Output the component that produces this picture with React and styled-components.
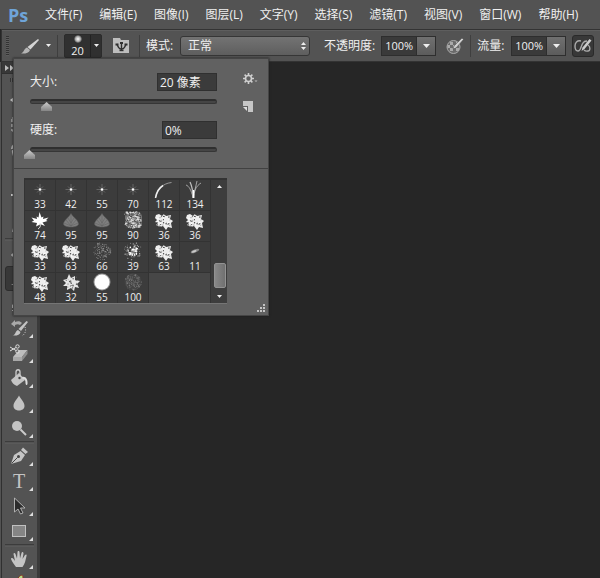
import React, { useState } from "react";
import styled, { createGlobalStyle } from "styled-components";

const GlobalStyle = createGlobalStyle`
  * {
    box-sizing: border-box;
  }

  body {
    margin: 0;
    overflow: hidden;
    background: #262626;
    color: #f0f0f0;
    font-family: "Open Sans", "Noto Sans CJK SC", sans-serif;
    font-size: 12px;
  }

  button, input, select {
    margin: 0;
    color: inherit;
    font-family: inherit;
    font-size: inherit;
  }
`;

const AppShell = styled.div`
  height: 100vh;
  display: flex;
  flex-direction: column;
  overflow: hidden;
`;

const MenuBar = styled.nav`
  flex: none;
  height: 29px;
  padding: 0 8px;
  display: flex;
  align-items: center;
  gap: 1px;
  background: #535353;
`;

const Logo = styled.span`
  width: 28px;
  color: #6fa4d8;
  font-size: 18px;
  font-weight: 700;
  line-height: 26px;
`;

const MenuButton = styled.button`
  flex: none;
  padding: 0 8px;
  border: none;
  background: none;
  line-height: 28px;
  white-space: nowrap;
`;

const OptionsBar = styled.div`
  position: relative;
  z-index: 2;
  flex: none;
  height: 33px;
  margin-left: 1px;
  padding: 0 4px;
  display: flex;
  align-items: center;
  gap: 6px;
  background: #535353;
  border: solid #333;
  border-width: 1px 0 1px 1px;
  box-shadow: inset 0 1px #5e5e5e;
`;

const Grip = styled.div`
  flex: none;
  width: 3px;
  height: 20px;
  background: repeating-linear-gradient(#333 0 1px, #5c5c5c 1px 2px);
`;

const Divider = styled.div`
  flex: none;
  width: 1px;
  height: 22px;
  background: #3f3f3f;
`;

const IconButton = styled.button`
  flex: none;
  padding: ${(p) => p.$padding || "0"};
  display: flex;
  align-items: center;
  gap: 6px;
  border: none;
  background: none;
`;

const PresetButton = styled.button`
  flex: none;
  width: 38px;
  height: 24px;
  padding: 0;
  display: flex;
  background: #303030;
  border: 1px solid #2b2b2b;
  border-radius: 2px;
  font-size: 11px;
`;

const PresetPreview = styled.span`
  flex: 1;
  height: 100%;
  display: flex;
  flex-direction: column;
  align-items: center;
  justify-content: space-between;
  line-height: 12px;
`;

const SoftDot = styled.span`
  width: 8px;
  height: 8px;
  border-radius: 50%;
  background: radial-gradient(#eee 10%, #aaa 45%, #303030 75%);
`;

const PresetArrow = styled.span`
  width: 11px;
  height: 100%;
  display: flex;
  align-items: center;
  justify-content: center;
  border-left: 1px solid #222;
`;

const FieldLabel = styled.label`
  flex: none;
  min-width: ${(p) => (p.$wide ? "50px" : "28px")};
  white-space: nowrap;
  line-height: 18px;
`;

const SelectWrap = styled.div`
  position: relative;
  flex: none;
  width: 130px;
  margin-right: 8px;
`;

const ModeSelect = styled.select`
  width: 100%;
  height: 20px;
  padding: 0 7px;
  appearance: none;
  background: linear-gradient(#737373, #5e5e5e);
  border: 1px solid #363636;
  border-radius: 3px;
`;

const SelectArrows = styled.svg`
  position: absolute;
  top: 5px;
  right: 4px;
  pointer-events: none;
`;

const Combo = styled.div`
  flex: none;
  display: flex;
  height: 20px;
  border: 1px solid #2e2e2e;
`;

const ComboInput = styled.input`
  width: 34px;
  padding: 0 0 0 3px;
  background: #3a3a3a;
  border: none;
  outline: none;
  font-size: 11px;
`;

const ComboButton = styled.button`
  width: 19px;
  padding: 0;
  display: flex;
  align-items: center;
  justify-content: center;
  background: linear-gradient(#707070, #5c5c5c);
  border: none;
  border-left: 1px solid #2e2e2e;
`;

const ToggleButton = styled.button`
  flex: none;
  width: 22px;
  height: 22px;
  padding: 0;
  display: flex;
  align-items: center;
  justify-content: center;
  background: #383838;
  border: 1px solid #2a2a2a;
  border-radius: 3px;
`;

const Workspace = styled.div`
  flex: 1;
  min-height: 0;
  display: flex;
`;

const ToolDock = styled.aside`
  flex: none;
  width: 40px;
  padding-left: 1px;
  background: #535353;
  border-right: 3px solid #3a3a3a;
`;

const ToolColumn = styled.div`
  height: 100%;
  display: flex;
  flex-direction: column;
  overflow: hidden;
  border-left: 1px solid #303030;
`;

const DockHeader = styled.button`
  flex: none;
  height: 12px;
  padding: 0 3px;
  display: flex;
  align-items: center;
  background: #383838;
  border: none;
  border-bottom: 1px solid #303030;
`;

const DockGrip = styled.div`
  flex: none;
  height: 4px;
  margin: 4px 8px 6px;
  background: repeating-linear-gradient(90deg, #333 0 1px, #5c5c5c 1px 2px);
`;

const ToolButton = styled.button`
  flex: none;
  height: 25px;
  padding: 0 4px 0 3px;
  display: flex;
  align-items: flex-end;
  background: ${(p) => (p.$active ? "#383838" : "none")};
  border: 1px solid ${(p) => (p.$active ? "#2c2c2c" : "transparent")};
  border-radius: 3px;
  margin: 0 1px 0 3px;

  & > svg {
    flex: none;
    margin-bottom: 2px;
  }
`;

const ToolDivider = styled.div`
  flex: none;
  height: 3px;
  margin: 0 3px;
  border-top: 1px solid #3c3c3c;
  border-bottom: 1px solid #5a5a5a;
`;

const Canvas = styled.main`
  flex: 1;
  background: #262626;
`;

const BrushPanel = styled.section`
  position: absolute;
  top: 28px;
  left: 11px;
  width: 256px;
  background: #616161;
  border: 1px solid #454545;
  box-shadow: 0 0 2px #1c1c1c;
`;

const BrushSettings = styled.div`
  display: flex;
  justify-content: space-between;
  padding: 14px 10px 16px 16px;
  border-bottom: 1px solid #414141;
`;

const Controls = styled.div`
  width: 187px;
  display: grid;
  gap: 17px;
`;

const Control = styled.div`
  display: grid;
  gap: 8px;
`;

const ControlRow = styled.div`
  display: flex;
  justify-content: space-between;
`;

const ValueInput = styled.input`
  width: ${(p) => (p.$narrow ? "55px" : "60px")};
  height: 18px;
  padding: 0 2px;
  background: #3b3b3b;
  border: 1px solid #303030;
  outline: none;
`;

const SliderTrack = styled.div`
  height: 5px;
  display: flex;
  background: #454545;
  border: 1px solid #363636;
  border-top: 2px solid #2f2f2f;
  border-radius: 3px;
`;

const Slider = styled.input`
  flex: 1;
  height: 11px;
  margin: 0 -7px;
  appearance: none;
  background: none;

  &::-webkit-slider-thumb {
    appearance: none;
    width: 11px;
    height: 9px;
    margin-top: 0;
    background: linear-gradient(#ccc, #858585);
    clip-path: polygon(50% 0, 100% 55%, 100% 100%, 0 100%, 0 55%);
  }
`;

const SideActions = styled.div`
  display: flex;
  flex-direction: column;
  gap: 16px;
`;

const BrushList = styled.div`
  width: 203px;
  height: 126px;
  margin: 9px 10px 0;
  padding: 2px 0 0 1px;
  display: flex;
  background: #333;
  border-bottom: 1px solid #757575;
`;

const BrushGrid = styled.div`
  display: grid;
  grid-template-columns: repeat(6, 30px);
  grid-auto-rows: 30px;
  gap: 1px;
`;

const BrushCell = styled.button`
  padding: 0;
  display: flex;
  flex-direction: column;
  align-items: center;
  justify-content: space-between;
  background: #3c3c3c;
  border: none;
  font-size: 10px;
  line-height: 11px;
`;

const EmptyArea = styled.div`
  grid-column: span 2;
  background: #474747;
`;

const ScrollBar = styled.div`
  flex: 1;
  margin-left: 1px;
  padding: 5px 1px 5px 2px;
  display: flex;
  flex-direction: column;
  align-items: center;
  justify-content: space-between;
  background: #3d3d3d;
`;

const ScrollThumb = styled.div`
  width: 12px;
  height: 25px;
  margin-top: 67px;
  background: linear-gradient(90deg, #888, #707070);
  border: 1px solid #929292;
  border-radius: 2px;
`;

const PanelFooter = styled.div`
  height: 11px;
  padding: 0 3px;
  display: flex;
  justify-content: flex-end;
`;

const menus = [
  "文件(F)",
  "编辑(E)",
  "图像(I)",
  "图层(L)",
  "文字(Y)",
  "选择(S)",
  "滤镜(T)",
  "视图(V)",
  "窗口(W)",
  "帮助(H)",
];

const brushes = [
  ["star", 33], ["star", 42], ["star", 55], ["star", 70], ["blade", 112], ["grass", 134],
  ["maple", 74], ["leaf", 95], ["leaf", 95], ["texture", 90], ["chalk", 36], ["chalk", 36],
  ["chalk", 33], ["chalk", 63], ["spray", 66], ["spatter", 39], ["chalk", 63], ["dash", 11],
  ["chalk", 48], ["flower", 32], ["round", 55], ["disc", 100],
];

// small seeded generator, so that the grain of a tip is stable
function grains(count, seed, spread, round) {
  let s = seed;
  const next = () => {
    s = (s * 16807) % 2147483647;
    return s / 2147483647;
  };
  return Array.from({ length: count }, () => {
    if (round) {
      const angle = next() * Math.PI * 2;
      const r = Math.pow(next(), round) * spread;
      return [10 + Math.cos(angle) * r, 9 + Math.sin(angle) * r, next()];
    }
    return [10 + (next() * 2 - 1) * spread, 9 + (next() * 2 - 1) * spread, next()];
  });
}

function Grain({ count, seed, spread, round, size, fill }) {
  return grains(count, seed, spread, round).map(([x, y, k], i) => (
    <circle key={i} cx={x} cy={y} r={size * (0.5 + k * 0.6)} fill={fill} />
  ));
}

const tips = {
  star: (
    <g stroke="#bbb" strokeWidth="0.6">
      <path d="M10 4v11M4.500 9.500h11M7 6.500l6 6M13 6.500l-6 6" opacity="0.550" />
      <circle cx="10" cy="9.500" r="1.200" fill="#fff" stroke="none" />
    </g>
  ),
  blade: (
    <g fill="none">
      <path d="M1.5 18C3 10 8 3.500 17.500 2.500" stroke="#999" />
      <path d="M1.500 18C2.500 12 5 8 9 5.500" stroke="#eee" strokeWidth="1.500" />
    </g>
  ),
  grass: (
    <g fill="none" stroke="#bbb">
      <path d="M8 18C8 11 7 6 5 2" strokeWidth="1.300" />
      <path d="M8 18C9 11 11 6 16 3M8 17C6 10 4 6 1 5M9 18C9 12 11 6 12 1" strokeWidth="0.800" />
      <path d="M8.500 18v-8" stroke="#fff" strokeWidth="1.500" />
    </g>
  ),
  maple: (
    <g>
      <path
        d="M9.500 1L11.500 6.500 13.500 5.500 13 8 18.500 6.500 16 9 17.500 10 12.500 11.500 15 15 10.500 13.200 6 15.500 7 12 1.500 11 4 9.500 1.500 6.500 7 8 6.500 5.500 8.500 6.500z"
        fill="#fff"
      />
      <path d="M10 12c1 3 0 5-2 6" fill="none" stroke="#ddd" />
    </g>
  ),
  leaf: (
    <g stroke="#606060" strokeWidth="0.500">
      <path d="M10 2.500c2 4 7 6 7.500 10.500-.5 4-14.500 4-15 0C3 9 8 6.500 10 2.500z" fill="#7e7e7e" />
      <path d="M10 4v12M10 15L5 9M10 15l5-6M10 15l-7-3M10 15l7-3M10 12L7 7M10 12l3-5" fill="none" />
    </g>
  ),
  texture: (
    <g>
      <rect x="2" y="1" width="17" height="16" rx="5" fill="#777" />
      <Grain count={130} seed={77} spread={8} size={0.8} fill="#ddd" />
      <Grain count={70} seed={901} spread={8} size={0.7} fill="#444" />
    </g>
  ),
  chalk: (
    <g>
      <path
        d="M2 4l3-1 3 2 2-2 2 2 5-1-1 4 3 2-2 2 1 5-4-1-2 3-3-4-3 1-4-2 2-2-3-1 2-2-2-2z"
        fill="#eee"
      />
      <Grain count={30} seed={431} spread={7} size={0.7} fill="#444" />
      <Grain count={10} seed={52} spread={6} size={0.8} fill="#fff" />
    </g>
  ),
  spray: <Grain count={150} seed={613} spread={9} round={0.6} size={0.5} fill="#999" />,
  spatter: (
    <g>
      <Grain count={80} seed={99} spread={9} round={0.8} size={0.6} fill="#bbb" />
      <Grain count={26} seed={740113} spread={5} round={0.6} size={0.9} fill="#fff" />
    </g>
  ),
  dash: (
    <g transform="rotate(-22 10 9)">
      <ellipse cx="10" cy="9" rx="4.500" ry="1.500" fill="#888" />
      <ellipse cx="9" cy="9" rx="2.500" ry="1" fill="#ccc" />
    </g>
  ),
  flower: (
    <g>
      <path
        d="M8 1l2 4 4-2 0 4 5 1-3 3 2 4-4-1-1 4-3-3-4 2 0-4-4 0 3-3-3-3 4-1z"
        fill="#e6e6e6"
      />
      <Grain count={20} seed={33871} spread={6} size={0.7} fill="#555" />
    </g>
  ),
  round: (
    <g>
      <circle cx="10" cy="9" r="8.500" fill="#999" />
      <circle cx="10" cy="9" r="7.500" fill="#fff" />
    </g>
  ),
  disc: (
    <g>
      <circle cx="10" cy="9" r="8.500" fill="#444" />
      <Grain count={130} seed={205} spread={8.5} round={0.5} size={0.5} fill="#858585" />
    </g>
  ),
};

const tools = [
  { id: "移动", art: <path d="M10 1l3 4h-2v4h4V7l4 3-4 3v-2h-4v4h2l-3 4-3-4h2v-4H5v2l-4-3 4-3v2h4V5H7z" /> },
  { id: "选框", art: <rect x="3" y="3" width="14" height="13" fill="none" stroke="#ccc" strokeDasharray="3 2" /> },
  { id: "套索", art: <path d="M3 9c0-9 15-8 15-2s-8 6-12 4-2 2-1 6" fill="none" stroke="#ccc" strokeWidth="1.500" /> },
  { id: "快速选择", art: <path d="M4 17l8-9 2 2-8 9zM12 2l1 4 4 1-4 1-1 4-1-4-4-1 4-1z" /> },
  { id: "裁剪", art: <path d="M5 1v13h14M2 5h12v14" fill="none" stroke="#ccc" strokeWidth="2" /> },
  { id: "吸管", art: <path d="M3 17l1-4 7-7 3 3-7 7zM11 4l3-3 5 5-3 3z" /> },
  { divider: true, id: "retouch" },
  { id: "修复画笔", art: <path d="M2 12L12 2l6 6L8 18z" /> },
  { id: "画笔", active: true, art: <path d="M2 17c4-1 2-5 5-6l2 2c0 3-3 4-7 4zM8 10L18 1l1 1-9 10z" /> },
  { id: "仿制图章", art: <path d="M8 2h5v6l4 4v3H3v-3l5-4zM3 17h14v1H3z" /> },
  {
    id: "历史记录画笔",
    art: (
      <g>
        <path d="M17.500 3l1.500 1-7 9-2.500-2zM9 12l2.500 2c-.5 3-4 4-8 3.500C7 17 6 13 9 12z" />
        <path d="M2 6l4-4v2c3-1 5-1 7 1l-2 2C9.500 6 8 6 6 7v2z" fill="#a9a9a9" />
        <path d="M16 9c1.500 4 0 7-3 9" fill="none" stroke="#ccc" strokeDasharray="1 1.500" />
      </g>
    ),
  },
  {
    id: "橡皮擦",
    art: (
      <g>
        <path d="M4 14l6-7h8.500L13 14z" fill="#bdbdbd" />
        <path d="M4 14h9v4H4z" fill="#a8a8a8" />
        <path d="M13 14l5.500-7v4L13 18z" fill="#8d8d8d" />
        <g fill="none" stroke="#dedede">
          <circle cx="8.500" cy="3.500" r="1.700" />
          <circle cx="8.500" cy="8.500" r="1.700" />
          <path d="M7 4.500L1 8M7 7.500L1 4" />
        </g>
      </g>
    ),
  },
  {
    id: "油漆桶",
    art: (
      <g>
        <path d="M2 12l8-7 6 7-8 6c-3-1-5-3-6-6z" />
        <path d="M13 9c4-1 6 3 5.500 7-.5 2-2 1-2-1 0-3-.5-4-3-4z" fill="#ddd" />
        <path d="M7 9V4c0-3 4-3 4 0v5" fill="none" stroke="#ccc" strokeWidth="1.300" />
        <circle cx="10.500" cy="10" r="1.200" fill="#444" />
      </g>
    ),
  },
  { id: "模糊", art: <path d="M10 2.500c2 4 5.500 6.500 5.500 10.500 0 6-11 6-11 0 0-4 3.500-6.500 5.500-10.500z" /> },
  {
    id: "减淡",
    art: (
      <g>
        <circle cx="8" cy="8" r="5" />
        <path d="M11.500 11.500L17 17" stroke="#ccc" strokeWidth="2" />
      </g>
    ),
  },
  { divider: true, id: "vector" },
  {
    id: "钢笔",
    art: (
      <g>
        <path d="M12 4l2-2.500 5 4.500-2.500 2z" />
        <path d="M2 18l3-9 6.500-4 4.500 4-4 6z" />
        <path d="M2.500 17.500l6-6" stroke="#444" />
        <circle cx="9.500" cy="10.500" r="1.500" fill="#444" />
      </g>
    ),
  },
  {
    id: "文字",
    art: (
      <text x="10" y="17" textAnchor="middle" fontFamily="Liberation Serif, serif" fontSize="20">
        T
      </text>
    ),
  },
  {
    id: "路径选择",
    art: <path d="M5.500 2v14l3.500-3 2.500 5 2.500-1-2.500-5H16z" fill="#2b2b2b" stroke="#bbb" strokeWidth="0.900" />,
  },
  {
    id: "矩形",
    art: <rect x="3.500" y="4.500" width="13" height="11" fill="#858585" stroke="#c0c0c0" />,
  },
  { divider: true, id: "view" },
  {
    id: "抓手",
    art: (
      <path d="M7 18c-2-3-4-5-5-8 0-1 1.500-1.500 2.500 0L6 12 4.500 5c0-1.500 1.500-1.500 2 0L8 9.500 8.500 3c0-1.500 2-1.500 2 0l.5 6.500L12.500 4c.5-1.500 2-1 2 .5L13.500 10l2.500-4c1-1 2-.5 1.500 1-1 4-1.500 8-4 11z" />
    ),
  },
  {
    id: "取样",
    art: <path d="M7 10C8 2 14-1 14 3s-2 9-7 12z" fill="#b5df86" stroke="#8a3322" />,
  },
];

function Caret({ color = "#eee", up, small }) {
  return (
    <svg width={small ? 5 : 7} height={small ? 3 : 4} viewBox="0 0 7 4" aria-hidden="true">
      <path d={up ? "M0 4h7L3.500 0z" : "M0 0h7L3.500 4z"} fill={color} />
    </svg>
  );
}

function BrushIcon() {
  return (
    <svg width="20" height="18" viewBox="0 0 20 18" aria-hidden="true">
      <path d="M18 2l1 1-8.500 9.500-3-2.500z" fill="#d5d5d5" />
      <path d="M7 10.500l3 2.500c-1 3-5 4-9 3.500 3-1 3-5 6-6z" fill="#b5b5b5" />
    </svg>
  );
}

function FolderIcon() {
  return (
    <svg width="17" height="17" viewBox="0 0 17 17" aria-hidden="true">
      <path d="M0 1h7l1 2h8v13H0z" fill="#bdbdbd" />
      <g fill="none" stroke="#2f2f2f" strokeWidth="1.400">
        <path d="M8.500 14V6M8 12C6 12 5 10 4 7M9 12c2 0 3-2 4-5" />
        <path d="M2.500 7.500h3M7 6h3M11.500 7.500h3" strokeWidth="2" />
        <path d="M6.500 13.500h4" />
      </g>
    </svg>
  );
}

function PressureIcon() {
  return (
    <svg width="18" height="18" viewBox="0 0 18 18" aria-hidden="true">
      <circle cx="7.500" cy="10" r="6.500" fill="#6b6b6b" stroke="#aaa" />
      <path d="M4 5h3v3H4zM10 5h2v3h-2zM1.500 8H4v3H1.500zM7 8h3v3H7zM4 11h3v3H4zM10 11h3v3h-3z" fill="#aaa" />
      <path d="M16 1l1.500 1.500L10 11l-3 1 1-3z" fill="#d0d0d0" stroke="#444" strokeWidth="0.500" />
    </svg>
  );
}

function AirbrushIcon() {
  return (
    <svg width="18" height="16" viewBox="0 0 18 16" fill="none" aria-hidden="true">
      <path d="M7 3C3 2 1 5 1 8s1 5 3 5c3 0 3-6 5-8 1-2 3-2 4-2" stroke="#aaa" strokeWidth="1.400" />
      <path d="M14 7c3 2 2 6 0 6-2 .5-3 0-4-1" stroke="#aaa" strokeWidth="1.400" />
      <path d="M15.500 1l2 1.500-7 8.500-3 2 1-3.500z" fill="#ccc" />
    </svg>
  );
}

function GearIcon() {
  return (
    <svg width="15" height="12" viewBox="0 0 15 12" aria-hidden="true">
      <circle cx="5.500" cy="5.500" r="3" fill="none" stroke="#d0d0d0" strokeWidth="1.600" />
      <path
        d="M5.500 0v2M5.500 9v2M0 5.500h2M9 5.500h2M1.600 1.600L3 3M8 8l1.400 1.400M9.400 1.600L8 3M3 8L1.600 9.400"
        stroke="#d0d0d0"
        strokeWidth="1.600"
      />
      <path d="M11.500 7.500h3L13 9z" fill="#bbb" />
    </svg>
  );
}

function NewPresetIcon() {
  return (
    <svg width="10" height="11" viewBox="0 0 10 11" aria-hidden="true">
      <path d="M0 0h10v11H5V5H0z" fill="#c6c6c6" />
      <path d="M0 6h4v4z" fill="#ddd" />
    </svg>
  );
}

function ResizeDots() {
  const dots = [[6, 0], [3, 3], [6, 3], [0, 6], [3, 6], [6, 6]];
  return (
    <svg width="8" height="8" aria-hidden="true">
      {dots.map(([x, y]) => (
        <rect key={`${x}-${y}`} x={x} y={y} width="2" height="2" fill="#c4c4c4" />
      ))}
    </svg>
  );
}

function PercentCombo({ id }) {
  return (
    <Combo>
      <ComboInput id={id} defaultValue="100%" />
      <ComboButton aria-label="展开">
        <Caret />
      </ComboButton>
    </Combo>
  );
}

function BrushPopover({ size, onSize, hardness, onHardness }) {
  return (
    <BrushPanel>
      <BrushSettings>
        <Controls>
          <Control>
            <ControlRow>
              <FieldLabel htmlFor="size">大小:</FieldLabel>
              <ValueInput id="size" value={`${size} 像素`} readOnly />
            </ControlRow>
            <SliderTrack>
              <Slider
                type="range"
                aria-label="大小"
                min="0"
                max="220"
                value={size}
                onChange={(e) => onSize(Number(e.target.value))}
              />
            </SliderTrack>
          </Control>
          <Control>
            <ControlRow>
              <FieldLabel htmlFor="hardness">硬度:</FieldLabel>
              <ValueInput id="hardness" value={`${hardness}%`} readOnly $narrow />
            </ControlRow>
            <SliderTrack>
              <Slider
                type="range"
                aria-label="硬度"
                value={hardness}
                onChange={(e) => onHardness(Number(e.target.value))}
              />
            </SliderTrack>
          </Control>
        </Controls>
        <SideActions>
          <IconButton aria-label="设置">
            <GearIcon />
          </IconButton>
          <IconButton aria-label="新建画笔">
            <NewPresetIcon />
          </IconButton>
        </SideActions>
      </BrushSettings>
      <BrushList>
        <BrushGrid>
          {brushes.map(([kind, px], i) => (
            <BrushCell key={i}>
              <svg width="20" height="19" viewBox="0 0 20 19" aria-hidden="true">
                {tips[kind]}
              </svg>
              {px}
            </BrushCell>
          ))}
          <EmptyArea />
        </BrushGrid>
        <ScrollBar>
          <Caret up small />
          <ScrollThumb />
          <Caret small />
        </ScrollBar>
      </BrushList>
      <PanelFooter>
        <ResizeDots />
      </PanelFooter>
    </BrushPanel>
  );
}

export default function App() {
  const [size, setSize] = useState(20);
  const [hardness, setHardness] = useState(0);

  return (
    <AppShell>
      <GlobalStyle />
      <MenuBar>
        <Logo>Ps</Logo>
        {menus.map((name) => (
          <MenuButton key={name}>{name}</MenuButton>
        ))}
      </MenuBar>
      <OptionsBar>
        <Grip />
        <IconButton aria-label="画笔工具" $padding="0 0 0 5px">
          <BrushIcon />
          <Caret small />
        </IconButton>
        <Divider />
        <PresetButton>
          <PresetPreview>
            <SoftDot />
            {size}
          </PresetPreview>
          <PresetArrow>
            <Caret small />
          </PresetArrow>
        </PresetButton>
        <IconButton aria-label="画笔面板" $padding="0 3px 0 5px">
          <FolderIcon />
        </IconButton>
        <Divider />
        <FieldLabel htmlFor="mode">模式:</FieldLabel>
        <SelectWrap>
          <ModeSelect id="mode">
            <option>正常</option>
          </ModeSelect>
          <SelectArrows width="5" height="10" aria-hidden="true">
            <path d="M0 4h5L2.500 1zM0 6h5L2.500 9z" fill="#eee" />
          </SelectArrows>
        </SelectWrap>
        <FieldLabel htmlFor="opacity" $wide>
          不透明度:
        </FieldLabel>
        <PercentCombo id="opacity" />
        <IconButton aria-label="不透明度压力" $padding="0 0 0 4px">
          <PressureIcon />
        </IconButton>
        <Divider />
        <FieldLabel htmlFor="flow">流量:</FieldLabel>
        <PercentCombo id="flow" />
        <ToggleButton aria-label="喷枪">
          <AirbrushIcon />
        </ToggleButton>
        <BrushPopover
          size={size}
          onSize={setSize}
          hardness={hardness}
          onHardness={setHardness}
        />
      </OptionsBar>
      <Workspace>
        <ToolDock>
          <ToolColumn>
            <DockHeader aria-label="展开工具栏">
              <svg width="9" height="6" aria-hidden="true">
                <path d="M0 0l4 3-4 3zM5 0l4 3-4 3z" fill="#bbb" />
              </svg>
            </DockHeader>
            <DockGrip />
            {tools.map((tool) =>
              tool.divider ? (
                <ToolDivider key={tool.id} />
              ) : (
                <ToolButton key={tool.id} aria-label={tool.id} $active={tool.active}>
                  <svg width="20" height="20" viewBox="0 0 20 20" fill="#c4c4c4" aria-hidden="true">
                    {tool.art}
                  </svg>
                  <svg width="4" height="4" aria-hidden="true">
                    <path d="M4 0v4H0z" fill="#ddd" />
                  </svg>
                </ToolButton>
              )
            )}
          </ToolColumn>
        </ToolDock>
        <Canvas />
      </Workspace>
    </AppShell>
  );
}
